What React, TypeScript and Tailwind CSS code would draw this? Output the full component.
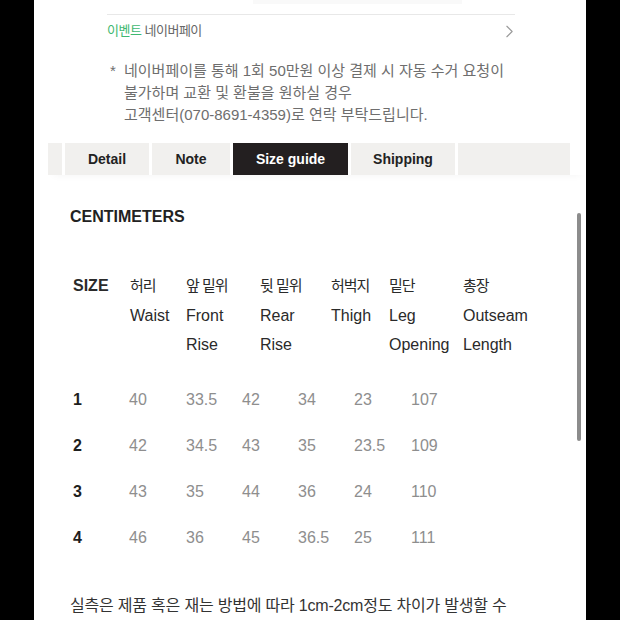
import React from 'react';
import { ChevronRight } from 'lucide-react';

const font = { fontFamily: '"Liberation Sans", "Noto Sans CJK KR", sans-serif' };

const headers = [
  { ko: '허리', en: ['Waist'] },
  { ko: '앞 밑위', en: ['Front', 'Rise'] },
  { ko: '뒷 밑위', en: ['Rear', 'Rise'] },
  { ko: '허벅지', en: ['Thigh'] },
  { ko: '밑단', en: ['Leg', 'Opening'] },
  { ko: '총장', en: ['Outseam', 'Length'] },
];

const rows = [
  ['1', '40', '33.5', '42', '34', '23', '107'],
  ['2', '42', '34.5', '43', '35', '23.5', '109'],
  ['3', '43', '35', '44', '36', '24', '110'],
  ['4', '46', '36', '45', '36.5', '25', '111'],
];

const tabs = [
  { label: '', w: 'w-[14px]' },
  { label: 'Detail', w: 'w-[84px]' },
  { label: 'Note', w: 'w-[78px]' },
  { label: 'Size guide', w: 'w-[115px]', active: true },
  { label: 'Shipping', w: 'w-[104px]' },
  { label: '', w: 'w-[112px]' },
];

export default function App() {
  return (
    <div className="w-[620px] h-[620px] bg-black flex justify-center overflow-hidden" style={font}>
      <div className="relative w-[552px] h-full bg-white overflow-hidden">
        {/* bottom of previous button */}
        <div className="ml-[219px] w-[209px] h-[4px] bg-[#f9f9f9]" />

        {/* event row */}
        <div className="mt-[10px] mx-[73px] w-[408px] border-t border-[#e8e8e8]">
          <div className="h-[32px] flex items-center justify-between">
            <div className="text-[13px] tracking-[-0.5px]">
              <span className="text-[#3fb871]">이벤트</span>{' '}
              <span className="text-[#666]">네이버페이</span>
            </div>
            <ChevronRight size={21} strokeWidth={1.3} className="text-[#9a9a9a] -mr-[5px]" />
          </div>
        </div>

        {/* notes */}
        <div className="mt-[13px] ml-[76px] flex text-[15px] leading-[22px] text-[#6e6e6e]">
          <span className="w-[14px]">*</span>
          <div>
            <p>네이버페이를 통해 1회 50만원 이상 결제 시 자동 수거 요청이</p>
            <p>불가하며 교환 및 환불을 원하실 경우</p>
            <p>고객센터(070-8691-4359)로 연락 부탁드립니다.</p>
          </div>
        </div>

        {/* tabs */}
        <div className="mt-[17px] ml-[14px] flex gap-[3px] shadow-[0_6px_8px_-6px_rgba(0,0,0,0.05)]">
          {tabs.map((t, i) => (
            <div
              key={i}
              className={`${t.w} h-[32px] flex items-center justify-center text-[14px] font-bold ${
                t.active ? 'bg-[#231f20] text-white' : 'bg-[#f1f0ee] text-[#222]'
              }`}
            >
              {t.label}
            </div>
          ))}
        </div>

        {/* unit */}
        <div className="mt-[30px] ml-[36px] text-[16px] leading-[24px] font-semibold text-[#222]">
          CENTIMETERS
        </div>

        {/* header */}
        <div className="mt-[42px] ml-[39px] grid grid-cols-[57px_56px_74px_71px_58px_74px_auto] leading-[29.5px] text-[16px] text-[#2a2a2a]">
          <div className="font-bold">SIZE</div>
          {headers.map((h) => (
            <div key={h.ko}>
              <div className="text-[15px] tracking-[-1px]">{h.ko}</div>
              {h.en.map((e) => (
                <div key={e}>{e}</div>
              ))}
            </div>
          ))}
        </div>

        {/* data */}
        <div className="mt-[17px] ml-[39px]">
          {rows.map((r) => (
            <div
              key={r[0]}
              className="h-[46px] grid grid-cols-[56px_57px_56px_56px_56px_57px_auto] items-center text-[16px]"
            >
              {r.map((c, i) => (
                <div key={i} className={i === 0 ? 'font-bold text-[#1e1e1e]' : 'text-[#8e8e8e]'}>
                  {c}
                </div>
              ))}
            </div>
          ))}
        </div>

        <p className="mt-[33px] ml-[36px] text-[16px] leading-[24px] tracking-[-0.2px] text-[#333]">
          실측은 제품 혹은 재는 방법에 따라 1cm-2cm정도 차이가 발생할 수
        </p>

        {/* scrollbar */}
        <div className="absolute left-[543px] top-[213px] w-[4px] h-[228px] rounded-full bg-[#8c8c8c]" />
      </div>
    </div>
  );
}
